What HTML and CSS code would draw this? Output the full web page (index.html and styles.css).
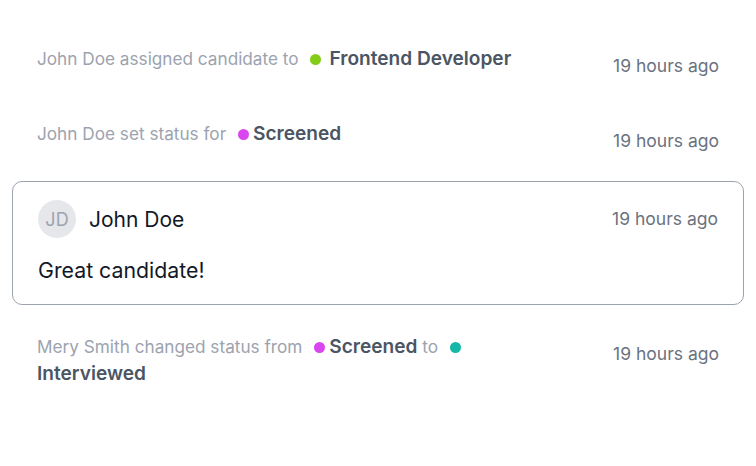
FILE: index.html
```html
<!DOCTYPE html>
<html>
<head>
<meta charset="utf-8">
<link rel="stylesheet" href="styles.css">
</head>
<body>
<div class="feed">
  <div class="row">
    <div class="text">
      John Doe assigned candidate to <span class="tag"><span class="dot dot-green"></span><b>Frontend Developer</b></span>
    </div>
    <div class="time">19 hours ago</div>
  </div>
  <div class="row">
    <div class="text">
      John Doe set status for <span class="tag"><span class="dot dot-pink"></span><b>Screened</b></span>
    </div>
    <div class="time">19 hours ago</div>
  </div>
  <div class="card">
    <div class="card-head">
      <div class="author">
        <div class="avatar">JD</div>
        <div class="name">John Doe</div>
      </div>
      <div class="time card-time">19 hours ago</div>
    </div>
    <div class="comment">Great candidate!</div>
  </div>
  <div class="row">
    <div class="text">
      Mery Smith changed status from <span class="tag"><span class="dot dot-pink"></span><b>Screened</b></span> to <span class="tag"><span class="dot dot-teal"></span></span><br><b>Interviewed</b>
    </div>
    <div class="time">19 hours ago</div>
  </div>
</div>
</body>
</html>
```

FILE: styles.css
```css
* { box-sizing: border-box; }
html, body { margin: 0; background: #ffffff; }
body {
  font-family: Inter, "Noto Sans", sans-serif;
  width: 756px;
  height: 466px;
  overflow: hidden;
}
.feed {
  display: flex;
  flex-direction: column;
  gap: 14px;
  padding: 31px 12px 0 12px;
}
.row {
  display: flex;
  justify-content: space-between;
  align-items: flex-start;
  padding: 14px 25px;
}
.text {
  font-size: 17.2px;
  line-height: 27px;
  color: #9ca3af;
  max-width: 500px;
}
.text b {
  font-weight: 600;
  font-size: 19.1px;
  color: #4b5563;
}
.tag { white-space: nowrap; margin-left: 7px; }
.dot {
  display: inline-block;
  width: 11px;
  height: 11px;
  border-radius: 50%;
  margin-right: 8px;
  vertical-align: 0px;
}
.dot-green { background: #84cc16; }
.dot-pink { background: #d946ef; margin-right: 4px; }
.dot-teal { background: #14b8a6; }
.time {
  font-size: 17.5px;
  line-height: 24px;
  color: #6b7280;
  padding-top: 9px;
  white-space: nowrap;
}
.card {
  border: 1px solid #9ca3af;
  border-radius: 10px;
  padding: 18px 25px 20px 25px;
}
.card-head {
  display: flex;
  justify-content: space-between;
  align-items: center;
}
.author {
  display: flex;
  align-items: center;
  gap: 13px;
}
.avatar {
  width: 38px;
  height: 38px;
  border-radius: 50%;
  background: #e5e7eb;
  color: #9ca3af;
  font-size: 18px;
  display: flex;
  align-items: center;
  justify-content: center;
}
.name {
  font-size: 21px;
  color: #111827;
}
.card-time { padding-top: 0; }
.comment {
  margin-top: 18px;
  font-size: 21.3px;
  line-height: 28px;
  color: #111827;
}
```
